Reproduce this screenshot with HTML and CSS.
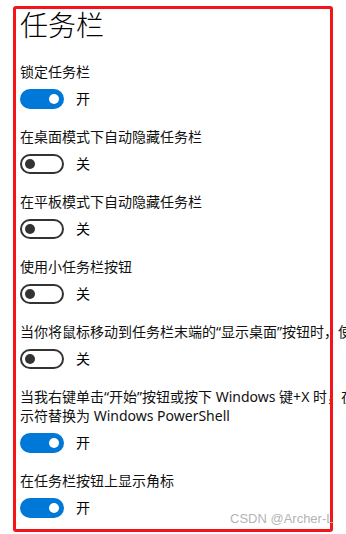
FILE: index.html
```html
<!DOCTYPE html>
<html lang="zh-CN">
<head>
<meta charset="utf-8">
<link rel="stylesheet" href="styles.css">
</head>
<body>
<div class="page">
  <h1 class="title">任务栏</h1>
  <div class="setting">
    <div class="label">锁定任务栏</div>
    <div class="row"><span class="toggle on"><span class="knob"></span></span><span class="state">开</span></div>
  </div>
  <div class="setting">
    <div class="label">在桌面模式下自动隐藏任务栏</div>
    <div class="row"><span class="toggle off"><span class="knob"></span></span><span class="state">关</span></div>
  </div>
  <div class="setting">
    <div class="label">在平板模式下自动隐藏任务栏</div>
    <div class="row"><span class="toggle off"><span class="knob"></span></span><span class="state">关</span></div>
  </div>
  <div class="setting">
    <div class="label">使用小任务栏按钮</div>
    <div class="row"><span class="toggle off"><span class="knob"></span></span><span class="state">关</span></div>
  </div>
  <div class="setting">
    <div class="label">当你将鼠标移动到任务栏末端的“显示桌面”按钮时，使用速览预览桌面</div>
    <div class="row"><span class="toggle off"><span class="knob"></span></span><span class="state">关</span></div>
  </div>
  <div class="setting">
    <div class="label">当我右键单击“开始”按钮或按下 Windows 键+X 时，在菜单中将命令提<br>示符替换为 Windows PowerShell</div>
    <div class="row"><span class="toggle on"><span class="knob"></span></span><span class="state">开</span></div>
  </div>
  <div class="setting">
    <div class="label">在任务栏按钮上显示角标</div>
    <div class="row"><span class="toggle on"><span class="knob"></span></span><span class="state">开</span></div>
  </div>
</div>
<div class="frame"></div>
<div class="watermark">CSDN @Archer-L</div>
</body>
</html>
```
FILE: styles.css
```css
html, body {
  margin: 0;
  padding: 0;
  background: #ffffff;
  overflow: hidden;
  width: 346px;
  height: 534px;
}
body {
  position: relative;
  font-family: "Noto Sans", "Noto Sans CJK SC", sans-serif;
  color: #000;
}
.page {
  display: flex;
  flex-direction: column;
  gap: 18px;
  padding: 6px 0 0 20px;
  width: 600px;
}
.title {
  margin: 0 0 2px 0;
  font-family: "Noto Sans CJK SC", sans-serif;
  font-size: 28px;
  font-weight: 300;
  line-height: 36px;
  height: 36px;
}
.setting {
  display: flex;
  flex-direction: column;
  gap: 8px;
}
.label {
  font-size: 14px;
  line-height: 19px;
  white-space: nowrap;
  color: #111;
}
.row {
  display: flex;
  align-items: center;
  height: 20px;
}
.toggle {
  position: relative;
  box-sizing: border-box;
  width: 44px;
  height: 20px;
  border-radius: 10px;
  flex: none;
}
.toggle.on {
  background: #0078d7;
}
.toggle.off {
  border: 2px solid #333;
  background: #fff;
}
.knob {
  position: absolute;
  top: 50%;
  width: 10px;
  height: 10px;
  margin-top: -5px;
  border-radius: 50%;
}
.toggle.on .knob {
  right: 5px;
  background: #fff;
}
.toggle.off .knob {
  left: 3px;
  background: #333;
}
.state {
  margin-left: 12px;
  font-size: 14px;
  line-height: 20px;
}
.frame {
  position: absolute;
  left: 13px;
  top: 6px;
  width: 314px;
  height: 520px;
  border: 3px solid #f5141a;
  border-radius: 3px;
}
.watermark {
  position: absolute;
  left: 230px;
  top: 511px;
  font-family: "Liberation Sans", sans-serif;
  font-size: 13px;
  line-height: 16px;
  color: #b4b4b4;
}
```
